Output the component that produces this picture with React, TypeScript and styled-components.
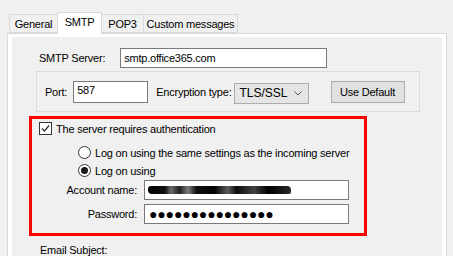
import React from "react";
import styled, { createGlobalStyle } from "styled-components";

const GlobalStyle = createGlobalStyle`
  html, body {
    margin: 0;
    padding: 0;
    background: #f0f0f0;
    overflow: hidden;
  }
  body {
    font-family: "Liberation Sans", Arial, sans-serif;
    font-size: 11px;
    letter-spacing: -0.22px;
    color: #000;
  }
`;

const Window = styled.div`
  width: 453px;
  height: 256px;
  padding: 12px 0 0 7px;
  box-sizing: border-box;
  overflow: hidden;
`;

const TabStrip = styled.div`
  display: flex;
  align-items: flex-end;
  height: 21px;
  padding-left: 2px;
`;

const Tab = styled.div<{ $active?: boolean; $w: number }>`
  position: relative;
  box-sizing: border-box;
  width: ${(p) => p.$w}px;
  height: ${(p) => (p.$active ? 22 : 19)}px;
  margin-bottom: ${(p) => (p.$active ? -1 : 0)}px;
  margin-left: -1px;
  z-index: ${(p) => (p.$active ? 2 : 1)};
  display: flex;
  align-items: center;
  justify-content: center;
  padding-bottom: ${(p) => (p.$active ? 3 : 0)}px;
  background: ${(p) => (p.$active ? "#fff" : "#f0f0f0")};
  border: 1px solid #d9d9d9;
  border-bottom: ${(p) => (p.$active ? "none" : "1px solid #d9d9d9")};
  &:first-child {
    margin-left: 0;
  }
`;

const Panel = styled.div`
  width: 440px;
  height: 240px;
  box-sizing: border-box;
  border: 1px solid #d9d9d9;
  background: #fff;
  padding: 3px 4px 0 4px;
`;

const PanelBody = styled.div`
  height: 100%;
  background: #f0f0f0;
  display: flex;
  flex-direction: column;
`;

const Row = styled.div<{ $top: number; $left?: number }>`
  display: flex;
  align-items: center;
  margin-top: ${(p) => p.$top}px;
  margin-left: ${(p) => p.$left ?? 0}px;
`;

const Label = styled.span<{ $w?: number }>`
  white-space: nowrap;
  ${(p) => (p.$w ? `width: ${p.$w}px; text-align: right;` : "")}
`;

const TextBox = styled.div<{ $w: number; $h?: number }>`
  box-sizing: border-box;
  width: ${(p) => p.$w}px;
  height: ${(p) => p.$h ?? 20}px;
  background: #fff;
  border: 1px solid #7a7a7a;
  padding: 0 3px;
  display: flex;
  align-items: center;
  overflow: hidden;
  white-space: nowrap;
`;

const GroupBox = styled.div`
  box-sizing: border-box;
  width: 384px;
  height: 41px;
  margin: 3px 0 0 24px;
  border: 1px solid #dcdcdc;
  display: flex;
  align-items: center;
  padding-left: 8px;
`;

const Combo = styled.div`
  box-sizing: border-box;
  width: 75px;
  height: 21px;
  margin: 3px 0 0 2px;
  background: #e5e5e5;
  border: 1px solid #acacac;
  display: flex;
  align-items: center;
  justify-content: space-between;
  padding: 0 6px 0 5px;
  font-size: 12px;
  letter-spacing: 0;
`;

const Button = styled.div`
  box-sizing: border-box;
  width: 74px;
  height: 22px;
  margin: 1px 0 0 22px;
  background: #e1e1e1;
  border: 1px solid #adadad;
  display: flex;
  align-items: center;
  justify-content: center;
`;

const Highlight = styled.div`
  box-sizing: border-box;
  width: 338px;
  height: 120px;
  margin: 4px 0 0 17px;
  border: 3px solid #ff0000;
  display: flex;
  flex-direction: column;
`;

const CheckBox = styled.span`
  box-sizing: border-box;
  width: 13px;
  height: 13px;
  border: 1px solid #333;
  background: #fff;
  margin-right: 4px;
  display: flex;
  align-items: center;
  justify-content: center;
`;

const Radio = styled.span<{ $on?: boolean }>`
  box-sizing: border-box;
  width: 13px;
  height: 13px;
  border-radius: 50%;
  border: 1px solid #333;
  background: #fff;
  margin-right: 4px;
  display: flex;
  align-items: center;
  justify-content: center;
  &::after {
    content: "";
    display: ${(p) => (p.$on ? "block" : "none")};
    width: 7px;
    height: 7px;
    border-radius: 50%;
    background: #1a1a1a;
  }
`;

const Scribble = styled.span`
  display: block;
  width: 143px;
  height: 8px;
  border-radius: 3px 4px 2px 4px;
  background: linear-gradient(
    90deg,
    #000 0%,
    #111 12%,
    #6a6a6a 16%,
    #222 22%,
    #7a7a7a 28%,
    #111 34%,
    #000 46%,
    #5c5c5c 56%,
    #0a0a0a 62%,
    #444 74%,
    #000 84%,
    #2a2a2a 100%
  );
  filter: blur(0.4px);
`;

const Dots = styled.span`
  font-size: 14px;
  letter-spacing: -0.15px;
  line-height: 1;
  margin-left: 1px;
`;

const Footer = styled.div`
  margin: 8px 0 0 28px;
`;

export default function App() {
  return (
    <>
      <GlobalStyle />
      <Window>
        <TabStrip>
          <Tab $w={49}>General</Tab>
          <Tab $active $w={45}>SMTP</Tab>
          <Tab $w={43}>POP3</Tab>
          <Tab $w={95}>Custom messages</Tab>
        </TabStrip>
        <Panel>
          <PanelBody>
            <Row $top={11} $left={27}>
              <Label>SMTP Server:</Label>
              <TextBox $w={207} style={{ marginLeft: 15 }}>
                smtp.office365.com
              </TextBox>
            </Row>
            <GroupBox>
              <Label>Port:</Label>
              <TextBox $w={75} $h={22} style={{ marginLeft: 6, alignItems: "flex-start", paddingTop: 2 }}>
                587
              </TextBox>
              <Label style={{ marginLeft: 8 }}>Encryption type:</Label>
              <Combo>
                TLS/SSL
                <svg width="8" height="5" viewBox="0 0 8 5">
                  <path d="M0.5 0.5 L4 4 L7.5 0.5" fill="none" stroke="#555" strokeWidth="1" />
                </svg>
              </Combo>
              <Button>Use Default</Button>
            </GroupBox>
            <Highlight>
              <Row $top={3} $left={7}>
                <CheckBox>
                  <svg width="11" height="11" viewBox="0 0 11 11">
                    <path d="M2 5.5 L4.5 8 L9 2.5" fill="none" stroke="#333" strokeWidth="1.3" />
                  </svg>
                </CheckBox>
                <Label>The server requires authentication</Label>
              </Row>
              <Row $top={11} $left={46}>
                <Radio />
                <Label>Log on using the same settings as the incoming server</Label>
              </Row>
              <Row $top={5} $left={46}>
                <Radio $on />
                <Label>Log on using</Label>
              </Row>
              <Row $top={3}>
                <Label $w={105}>Account name:</Label>
                <TextBox $w={205} style={{ marginLeft: 7 }}>
                  <Scribble />
                </TextBox>
              </Row>
              <Row $top={4}>
                <Label $w={105}>Password:</Label>
                <TextBox $w={205} style={{ marginLeft: 7 }}>
                  <Dots>●●●●●●●●●●●●●●●</Dots>
                </TextBox>
              </Row>
            </Highlight>
            <Footer>Email Subject:</Footer>
          </PanelBody>
        </Panel>
      </Window>
    </>
  );
}
